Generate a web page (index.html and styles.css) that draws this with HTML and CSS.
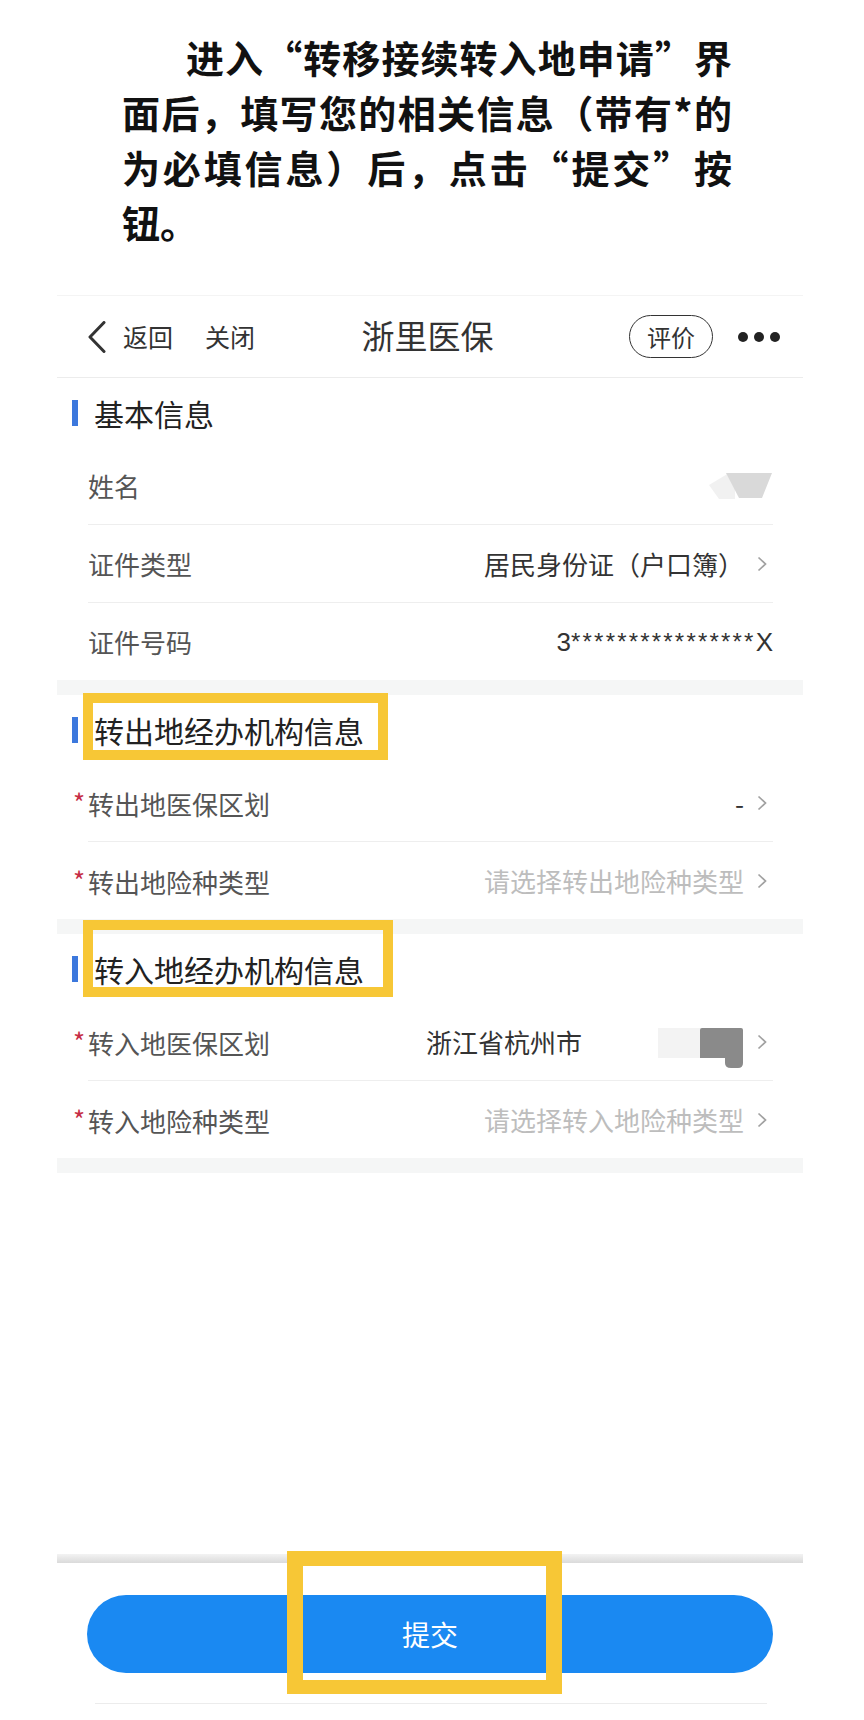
FILE: index.html
```html
<!DOCTYPE html>
<html lang="zh-CN">
<head>
<meta charset="utf-8">
<title>转移接续转入地申请</title>
<link rel="stylesheet" href="styles.css">
</head>
<body>
<div class="intro">
  <p>进入“转移接续转入地申请”界面后，填写您的相关信息（带有*的为必填信息）后，点击“提交”按钮。</p>
</div>

<div class="phone">
  <header class="nav">
    <div class="nav-left">
      <svg class="back" width="20" height="32" viewBox="0 0 20 32"><path d="M17 1.5 L3 16 L17 30.5" fill="none" stroke="#333" stroke-width="3" stroke-linecap="round" stroke-linejoin="round"/></svg>
      <span class="nav-link first">返回</span>
      <span class="nav-link">关闭</span>
    </div>
    <div class="nav-title">浙里医保</div>
    <div class="nav-right">
      <span class="pill">评价</span>
      <span class="dots"><i></i><i></i><i></i></span>
    </div>
  </header>

  <section class="group">
    <div class="group-head"><span class="bar"></span><h2>基本信息</h2></div>
    <div class="row">
      <span class="label">姓名</span>
      <svg class="blur-name" width="64" height="26" viewBox="0 0 64 26">
        <polygon points="0,12 20,0 26,0 26,26 10,26" fill="#f1f1f1"/>
        <polygon points="17,0 63,0 53,25 30,25" fill="#d9d9d9"/>
      </svg>
    </div>
    <div class="row">
      <span class="label">证件类型</span>
      <span class="value">居民身份证（户口簿）<svg class="chev" width="10" height="16" viewBox="0 0 10 16"><path d="M1.5 1.5 L8.5 8 L1.5 14.5" fill="none" stroke="#a0a0a0" stroke-width="1.7"/></svg></span>
    </div>
    <div class="row">
      <span class="label">证件号码</span>
      <span class="value id">3<span class="stars">****************</span>X</span>
    </div>
  </section>
  <div class="band"></div>

  <section class="group">
    <div class="group-head">
      <span class="bar"></span><h2>转出地经办机构信息</h2>
      <span class="mark mark-1"></span>
    </div>
    <div class="row">
      <span class="label"><b class="req">*</b>转出地医保区划</span>
      <span class="value">-<svg class="chev" width="10" height="16" viewBox="0 0 10 16"><path d="M1.5 1.5 L8.5 8 L1.5 14.5" fill="none" stroke="#a0a0a0" stroke-width="1.7"/></svg></span>
    </div>
    <div class="row">
      <span class="label"><b class="req">*</b>转出地险种类型</span>
      <span class="value placeholder">请选择转出地险种类型<svg class="chev" width="10" height="16" viewBox="0 0 10 16"><path d="M1.5 1.5 L8.5 8 L1.5 14.5" fill="none" stroke="#a0a0a0" stroke-width="1.7"/></svg></span>
    </div>
  </section>
  <div class="band"></div>

  <section class="group">
    <div class="group-head">
      <span class="bar"></span><h2>转入地经办机构信息</h2>
      <span class="mark mark-2"></span>
    </div>
    <div class="row">
      <span class="label"><b class="req">*</b>转入地医保区划</span>
      <span class="value">浙江省杭州市<svg class="blur-area" width="86" height="40" viewBox="0 0 86 40">
        <rect x="0" y="0" width="43" height="30" fill="#f3f3f3"/>
        <path d="M42 2 Q42 0 44 0 H83 Q85 0 85 2 V35 Q85 40 80 40 H73 Q67 40 67 35 V30 H42 Z" fill="#8a8a8a"/>
      </svg><svg class="chev" width="10" height="16" viewBox="0 0 10 16"><path d="M1.5 1.5 L8.5 8 L1.5 14.5" fill="none" stroke="#a0a0a0" stroke-width="1.7"/></svg></span>
    </div>
    <div class="row">
      <span class="label"><b class="req">*</b>转入地险种类型</span>
      <span class="value placeholder">请选择转入地险种类型<svg class="chev" width="10" height="16" viewBox="0 0 10 16"><path d="M1.5 1.5 L8.5 8 L1.5 14.5" fill="none" stroke="#a0a0a0" stroke-width="1.7"/></svg></span>
    </div>
  </section>
  <div class="band"></div>

  <footer class="footer">
    <div class="shadow"></div>
    <button class="submit" type="button">提交</button>
    <div class="home-line"></div>
    <span class="mark mark-3"></span>
  </footer>
</div>
</body>
</html>
```

FILE: styles.css
```css
* { box-sizing: border-box; }

html, body {
  margin: 0;
  padding: 0;
  background: #ffffff;
}

body {
  font-family: "Noto Sans CJK SC", "Noto Sans", sans-serif;
  color: #333;
}

/* ---------- intro paragraph ---------- */
.intro {
  padding: 29px 0 0 122px;
}

.intro p {
  margin: 0;
  width: 610px;
  font-size: 38px;
  font-weight: 700;
  line-height: 55px;
  color: #111;
  text-indent: 64px;
  text-align: justify;
}

/* ---------- phone screen ---------- */
.phone {
  margin: 46px 0 0 57px;
  width: 746px;
}

.nav {
  height: 83px;
  border-top: 1px solid #f4f4f4;
  border-bottom: 1px solid #ececec;
  display: grid;
  grid-template-columns: 1fr auto 1fr;
  align-items: center;
  padding: 0 23px 0 30px;
}

.nav-left {
  display: flex;
  align-items: center;
}

.back { display: block; }

.nav-link {
  font-size: 25px;
  color: #333;
  margin-left: 32px;
  line-height: 1;
}

.nav-link.first { margin-left: 16px; }

.nav-title {
  font-size: 33px;
  color: #333;
  margin-right: 12px;
  margin-top: -4px;
}

.nav-right {
  display: flex;
  align-items: center;
  justify-content: flex-end;
}

.pill {
  width: 84px;
  height: 43px;
  border: 1.5px solid #333;
  border-radius: 22px;
  font-size: 24px;
  color: #333;
  display: flex;
  align-items: center;
  justify-content: center;
  line-height: 1;
}

.dots {
  display: flex;
  gap: 6px;
  margin-left: 25px;
}

.dots i {
  display: block;
  width: 10px;
  height: 10px;
  border-radius: 50%;
  background: #222;
}

/* ---------- groups ---------- */
.group-head {
  position: relative;
  height: 69px;
  display: flex;
  align-items: center;
}

.bar {
  width: 6px;
  height: 26px;
  margin-left: 15px;
  background: #3c78dd;
}

.group-head h2 {
  margin: 0 0 0 16px;
  font-size: 30px;
  font-weight: 400;
  color: #222;
  line-height: 1;
}

.row {
  height: 78px;
  margin: 0 30px 0 31px;
  border-bottom: 1px solid #eeeeee;
  display: flex;
  align-items: center;
  justify-content: space-between;
}

.row:last-child {
  height: 77px;
  border-bottom: none;
}

.label {
  font-size: 26px;
  color: #555;
  line-height: 1;
  white-space: nowrap;
}

.req {
  display: inline-block;
  width: 15px;
  margin-left: -15px;
  font-weight: 400;
  color: #c62d45;
  font-size: 26px;
  vertical-align: 2px;
}

.value {
  display: flex;
  align-items: center;
  font-size: 26px;
  color: #333;
  line-height: 1;
  white-space: nowrap;
}

.value .chev {
  margin: 0 6px 0 13px;
  flex: none;
}

.placeholder { color: #bdbdbd; }

.value.id {
  font-family: "Liberation Sans", "Noto Sans", sans-serif;
  font-size: 26px;
  color: #333;
}

.stars {
  font-size: 24px;
  letter-spacing: 2.2px;
  vertical-align: 2px;
}

.blur-name { display: block; }

.blur-area {
  display: block;
  margin: 13px 0 0 76px;
}

.band {
  height: 15px;
  background: #f5f6f6;
}

/* ---------- annotation frames ---------- */
.mark {
  position: absolute;
  border: 10px solid #f7c736;
  pointer-events: none;
}

.mark-1 {
  left: 26px;
  top: -2px;
  width: 305px;
  height: 67px;
}

.mark-2 {
  left: 26px;
  top: -14px;
  width: 310px;
  height: 77px;
}

/* ---------- footer ---------- */
.footer {
  position: relative;
  margin-top: 381px;
  padding-bottom: 17px;
}

.shadow {
  height: 9px;
  background: linear-gradient(#f3f3f3, #dadada);
}

.submit {
  display: block;
  width: 686px;
  height: 78px;
  margin: 32px 0 0 30px;
  border: none;
  border-radius: 39px;
  background: #1a89f2;
  color: #fff;
  font-family: "Noto Sans CJK SC", "Noto Sans", sans-serif;
  font-size: 28px;
  padding: 0;
}

.home-line {
  height: 1px;
  margin: 30px 36px 0 38px;
  background: #ececec;
}

.mark-3 {
  left: 230px;
  top: -3px;
  width: 275px;
  height: 143px;
  border-width: 15px 16px 14px 16px;
}
```
